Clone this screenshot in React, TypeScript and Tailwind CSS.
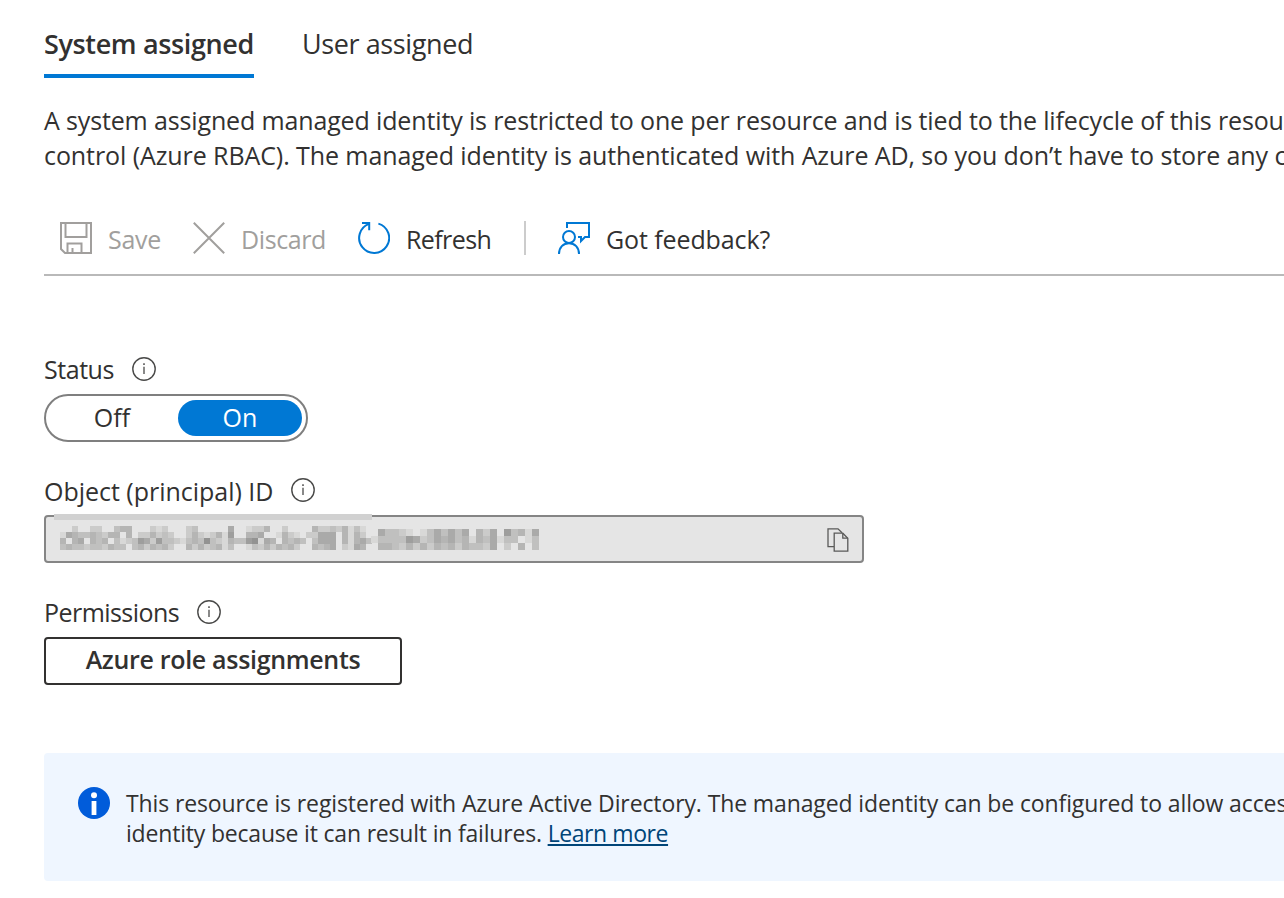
import type { ReactNode } from "react";

const SHADES: Record<string, string> = {
  a: "#d8d8d7",
  b: "#cbcbca",
  c: "#c0c0bf",
  d: "#b5b5b4",
  e: "#aaaaa9",
  f: "#9e9e9d",
  g: "#939392",
};

// Redacted identifier: one letter per block, "." is an empty block.
const LEFT_ROWS = [
  "..b..bb..cdd...bab...bc....." + "e..abbd..b....dbbcbdaca.",
  "aedccdcbdd.d.bbdbcb..bdbab" + "daf..dde..adba.bbeee.dadb.",
  "d.de.dcd.cabcfebfccbacdcgc" + "badccfgaed.dcdc.ceee.dadec",
  "cdccbccbdcc.cdbdcdb..dbdbc" + "dac..acbdbdcdb..dcde.baed.",
];
const RIGHT_ROWS = [
  ".eccba.acecece.dbe.fcdae",
  "accccfebcedecdadceacc.ac",
  ".ddcbdbdbdcdbdccbe.b.d.c",
];

function Mosaic() {
  return (
    <svg
      width="480"
      height="24"
      viewBox="0 0 480 24"
      shapeRendering="crispEdges"
      className="mb-0.5"
      aria-hidden="true"
    >
      {LEFT_ROWS.map((row, y) =>
        row
          .split("")
          .map((s, x) =>
            s === "." ? null : <rect key={`l${y}-${x}`} x={x * 6} y={y * 6} width="6" height="6" fill={SHADES[s]} />,
          ),
      )}
      {RIGHT_ROWS.map((row, y) =>
        row
          .split("")
          .map((s, x) =>
            s === "." ? null : (
              <rect key={`r${y}-${x}`} x={311 + x * 7} y={3 + y * 7} width="7" height="7" fill={SHADES[s]} />
            ),
          ),
      )}
    </svg>
  );
}

function InfoIcon() {
  return (
    <svg width="24" height="24" viewBox="0 0 24 24" fill="none" stroke="#4a4a49" aria-hidden="true">
      <circle cx="12" cy="12" r="11.2" strokeWidth="1.4" />
      <path d="M12 9.8V17" strokeWidth="1.3" />
      <path d="M12 6.3V8" strokeWidth="1.5" />
    </svg>
  );
}

function SaveIcon() {
  return (
    <svg width="32" height="32" viewBox="0 0 32 32" fill="none" stroke="#a19f9d" strokeWidth="2" aria-hidden="true">
      <path d="M1 1H31V31H5L1 27Z" />
      <path d="M5.5 1V15H26.5V1" />
      <path d="M7.5 31V21.5H21.5V31M12.5 31V26" />
    </svg>
  );
}

function DiscardIcon() {
  return (
    <svg width="32" height="32" viewBox="0 0 32 32" fill="none" stroke="#a19f9d" strokeWidth="2" aria-hidden="true">
      <path d="M.8 .8L31.2 31.2M31.2 .8L.8 31.2" />
    </svg>
  );
}

function RefreshIcon() {
  return (
    <svg width="32" height="32" viewBox="0 0 32 32" fill="none" stroke="#0078d4" strokeWidth="2" aria-hidden="true">
      <path d="M20.4 1.6A15 15 0 1 1 11 1.9" />
      <path d="M4 1H11.2V8.2" />
    </svg>
  );
}

function FeedbackIcon() {
  return (
    <svg width="32" height="32" viewBox="0 0 32 32" fill="none" stroke="#0078d4" strokeWidth="2" aria-hidden="true">
      <circle cx="11" cy="15" r="6" />
      <path d="M1 32C1 25.5 5.2 21.2 11 21.2S21 25.5 21 32" />
      <path d="M9 6V1H31V15H27L23 19V15H20" />
    </svg>
  );
}

function CopyIcon() {
  return (
    <svg
      width="22"
      height="24"
      viewBox="0 0 22 24"
      fill="none"
      stroke="#5a5a59"
      strokeWidth="1.3"
      className="mt-0.5"
      aria-hidden="true"
    >
      <path d="M7 18.7H1V.8H11L15 4.8" />
      <path d="M7.2 5.2H15.8L20.8 10.2V23.2H7.2Z" />
      <path d="M15.8 5.2V10.2H20.8" />
    </svg>
  );
}

function FieldLabel({ children }: { children: ReactNode }) {
  return <div className="flex h-6 items-center whitespace-nowrap leading-6">{children}</div>;
}

export default function App() {
  return (
    <main className="h-[898px] w-full overflow-hidden bg-white pl-11 font-['Open_Sans',sans-serif] text-[25px] text-[#323130]">
      <nav className="flex h-[78px] gap-12 whitespace-nowrap pt-6 text-[27px] leading-[39px]">
        <button className="h-[54px] w-[210px] border-b-4 border-[#0078d4] pb-[11px] text-left font-semibold tracking-[-0.36px]">
          System assigned
        </button>
        <button className="h-[39px] text-left tracking-[-0.4px]">User assigned</button>
      </nav>

      <p className="mt-[25px] whitespace-nowrap leading-[35px] tracking-[-0.14px]">
        A system assigned managed identity is restricted to one per resource and is tied to the lifecycle of this resource.
        <br />
        <span className="tracking-[-0.084px]">
          control (Azure RBAC). The managed identity is authenticated with Azure AD, so you don’t have to store any
          credentials
        </span>
      </p>

      <div className="mt-[31px] flex h-[72px] items-start whitespace-nowrap border-b-2 border-[#b9b9b9] pl-4 pt-[18px] leading-8">
        <button className="flex text-[#a19f9d]">
          <SaveIcon />
          <span className="ml-4 mt-px w-[53px] tracking-[-0.27px]">Save</span>
        </button>
        <button className="ml-8 flex text-[#a19f9d]">
          <DiscardIcon />
          <span className="ml-4 mt-px w-[85px] tracking-[-0.4px]">Discard</span>
        </button>
        <button className="ml-8 flex">
          <RefreshIcon />
          <span className="ml-4 mt-px w-[86px] text-left tracking-[-0.6px]">Refresh</span>
        </button>
        <span className="ml-8 -mt-px h-[34px] w-0.5 bg-[#cccccc]" />
        <button className="ml-8 flex">
          <FeedbackIcon />
          <span className="ml-4 mt-px tracking-[-0.1px]">Got feedback?</span>
        </button>
      </div>

      <section className="mt-[81px]">
        <FieldLabel>
          <span className="w-[88px] pb-px tracking-[-0.45px]">Status</span>
          <InfoIcon />
        </FieldLabel>
        <div className="mt-[13px] flex h-12 w-[264px] items-center rounded-full border-2 border-[#7f7f7f] p-1 leading-[34px]">
          <span className="h-9 w-32 pr-1 text-center">Off</span>
          <span className="h-9 w-[124px] rounded-full bg-[#0078d4] text-center text-white">On</span>
        </div>
      </section>

      <section className="mt-9">
        <FieldLabel>
          <span className="w-[247px] pt-0.5 tracking-[-0.02px]">Object (principal) ID</span>
          <InfoIcon />
        </FieldLabel>
        <div className="relative mt-[13px] flex h-12 w-[820px] items-center justify-between rounded-[4px] border-2 border-[#858585] bg-[#e5e5e5] pl-3.5 pr-[13px]">
          <span className="absolute -top-[3px] left-2 h-1.5 w-[318px] bg-[#d1d1d1]" />
          <Mosaic />
          <CopyIcon />
        </div>
      </section>

      <section className="mt-[37px]">
        <FieldLabel>
          <span className="w-[153px] pb-px tracking-[-0.55px]">Permissions</span>
          <InfoIcon />
        </FieldLabel>
        <button className="mt-[13px] block h-12 w-[358px] rounded-[4px] border-2 border-[#323130] pb-1 text-center font-semibold leading-10 tracking-[-0.32px]">
          Azure role assignments
        </button>
      </section>

      <aside className="mt-[68px] flex h-32 rounded-l-[4px] bg-[#eff6ff] pl-[34px] pt-[34px]">
        <svg width="32" height="32" viewBox="0 0 32 32" className="shrink-0" aria-hidden="true">
          <circle cx="16" cy="16" r="16" fill="#015cda" />
          <circle cx="16" cy="8.2" r="3" fill="#fff" />
          <path d="M13.6 14H18.4V28H13.6Z" fill="#fff" />
        </svg>
        <p className="ml-4 mt-px whitespace-nowrap text-[23px] leading-[30px] tracking-[-0.115px]">
          This resource is registered with Azure Active Directory. The managed identity can be configured to allow access
          <br />
          <span className="tracking-[-0.19px]">identity because it can result in failures. </span>
          <a href="#" className="tracking-[-0.42px] text-[#004578] underline decoration-2 underline-offset-2">
            Learn more
          </a>
        </p>
      </aside>
    </main>
  );
}
